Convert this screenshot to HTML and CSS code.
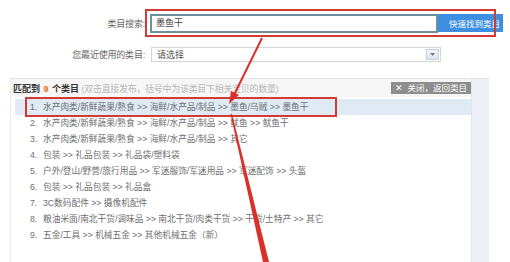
FILE: index.html
```html
<!DOCTYPE html>
<html lang="zh-CN">
<head>
    <meta charset="UTF-8">
    <title>类目搜索</title>
    <link rel="stylesheet" href="styles.css">
</head>
<body>
    <div class="page">
        <div class="form">
            <label class="label">类目搜索:</label>
            <div class="search">
                <div class="search-input">墨鱼干</div>
                <button class="search-btn">快速找到类目</button>
            </div>
            <label class="label">您最近使用的类目:</label>
            <div class="select">
                <span>请选择</span>
                <span class="select-arrow">
                    <svg width="5" height="3" viewBox="0 0 5 3"><path d="M0 0H5L2.5 3Z" fill="#6a7a90"/></svg>
                </span>
            </div>
        </div>

        <div class="panel">
            <div class="main">
                <div class="panel-head">
                    <div class="head-text">
                        <b>匹配到 <em>9</em> 个类目</b>
                        <span class="tip">(双击直接发布，括号中为该类目下相关宝贝的数量)</span>
                    </div>
                    <span class="close-btn">✕&nbsp; 关闭，返回类目</span>
                </div>
                <ol class="list">
                    <li class="active"><span class="num">1.</span>水产肉类/新鲜蔬果/熟食 &gt;&gt; 海鲜/水产品/制品 &gt;&gt; 墨鱼/乌贼 &gt;&gt; 墨鱼干</li>
                    <li><span class="num">2.</span>水产肉类/新鲜蔬果/熟食 &gt;&gt; 海鲜/水产品/制品 &gt;&gt; 鱿鱼 &gt;&gt; 鱿鱼干</li>
                    <li><span class="num">3.</span>水产肉类/新鲜蔬果/熟食 &gt;&gt; 海鲜/水产品/制品 &gt;&gt; 其它</li>
                    <li><span class="num">4.</span>包装 &gt;&gt; 礼品包装 &gt;&gt; 礼品袋/塑料袋</li>
                    <li><span class="num">5.</span>户外/登山/野营/旅行用品 &gt;&gt; 军迷服饰/军迷用品 &gt;&gt; 军迷配饰 &gt;&gt; 头盔</li>
                    <li><span class="num">6.</span>包装 &gt;&gt; 礼品包装 &gt;&gt; 礼品盒</li>
                    <li><span class="num">7.</span>3C数码配件 &gt;&gt; 摄像机配件</li>
                    <li><span class="num">8.</span>粮油米面/南北干货/调味品 &gt;&gt; 南北干货/肉类干货 &gt;&gt; 干货/土特产 &gt;&gt; 其它</li>
                    <li><span class="num">9.</span>五金/工具 &gt;&gt; 机械五金 &gt;&gt; 其他机械五金（新）</li>
                </ol>
            </div>
            <div class="strip"></div>
        </div>

        <!-- 标注：红框和箭头 -->
        <div class="mark mark-search"></div>
        <div class="mark mark-row"></div>
        <svg class="arrows" width="510" height="262" viewBox="0 0 510 262">
            <line x1="262" y1="38" x2="234" y2="95" stroke="#d8312c" stroke-width="2"/>
            <path d="M229 104L231 91L239 95Z" fill="#d8312c"/>
            <path d="M230.5 114L232 114L269 262L263 262Z" fill="#d8312c"/>
        </svg>
    </div>
</body>
</html>
```

FILE: styles.css
```css
*{
    margin:0;
    padding:0;
    box-sizing: border-box;
}

body{
    background: #fff;
    font-family: "Liberation Sans", "Noto Sans CJK SC", sans-serif;
    font-size: 9px;
    color: #555;
}

.page{
    position: relative;
    width: 510px;
    height: 262px;
    overflow: hidden;
}

.form{
    display: grid;
    grid-template-columns: 145px auto;
    column-gap: 5px;
    row-gap: 14px;
    padding-top: 14px;
    align-items: center;
}

.label{
    text-align: right;
    color: #666;
    letter-spacing: -0.2px;
}

.search{
    display: flex;
    height: 19px;
}

.search-input{
    width: 288px;
    height: 19px;
    border: 2px solid #6d919c;
    padding-left: 4px;
    line-height: 15px;
    color: #444;
}

.search-btn{
    width: 65px;
    height: 18px;
    border: none;
    background: #3e8fe0;
    color: #fff;
    font: inherit;
    font-size: 8.5px;
    text-align: right;
    padding-right: 3px;
}

.select{
    display: flex;
    justify-content: space-between;
    align-items: center;
    width: 290px;
    height: 15px;
    margin-left: 1px;
    border: 1px solid #d4d4d4;
    padding: 0 1px 0 5px;
    color: #555;
}

.select-arrow{
    display: flex;
    align-items: center;
    justify-content: center;
    width: 13px;
    height: 11px;
    border: 1px solid #c8cfdc;
    background: linear-gradient(#f4f6fa, #dde3ec);
}

.panel{
    display: flex;
    margin: 16px 0 0 10px;
    width: 479px;
    height: 200px;
    border-top: 1px solid #e2e2e2;
}

.main{
    flex: 1;
    border-left: 1px solid #ececec;
    border-right: 1px solid #e4e4ec;
}

.panel-head{
    display: flex;
    justify-content: space-between;
    align-items: center;
    height: 18px;
    padding-left: 2px;
    background: #f6f6f6;
}

.head-text b{
    color: #333;
    font-weight: bold;
}

.head-text em{
    font-style: normal;
    color: #f26a10;
    padding: 0 1px;
}

.tip{
    color: #b8b8b8;
    letter-spacing: -0.3px;
}

.close-btn{
    height: 12px;
    line-height: 12px;
    padding: 0 4px;
    background: #8d8d8d;
    color: #fff;
    font-size: 8.5px;
}

.list{
    list-style: none;
    margin-left: 4px;
    padding-top: 2px;
    background: #fff;
    height: 182px;
}

.list li{
    height: 16px;
    line-height: 16px;
    padding-left: 15px;
    white-space: nowrap;
    font-size: 8.7px;
    color: #6e6e6e;
}

.list li.active{
    background: #dfeaf5;
}

.num{
    display: inline-block;
    width: 13px;
}

.strip{
    width: 17px;
    background: #eef0f7;
}

.mark{
    position: absolute;
    border: 2px solid #d23a36;
}

.mark-search{
    left: 145px;
    top: 9px;
    width: 351px;
    height: 28px;
}

.mark-row{
    left: 25px;
    top: 97px;
    width: 312px;
    height: 20px;
}

.arrows{
    position: absolute;
    left: 0;
    top: 0;
    pointer-events: none;
}
```
